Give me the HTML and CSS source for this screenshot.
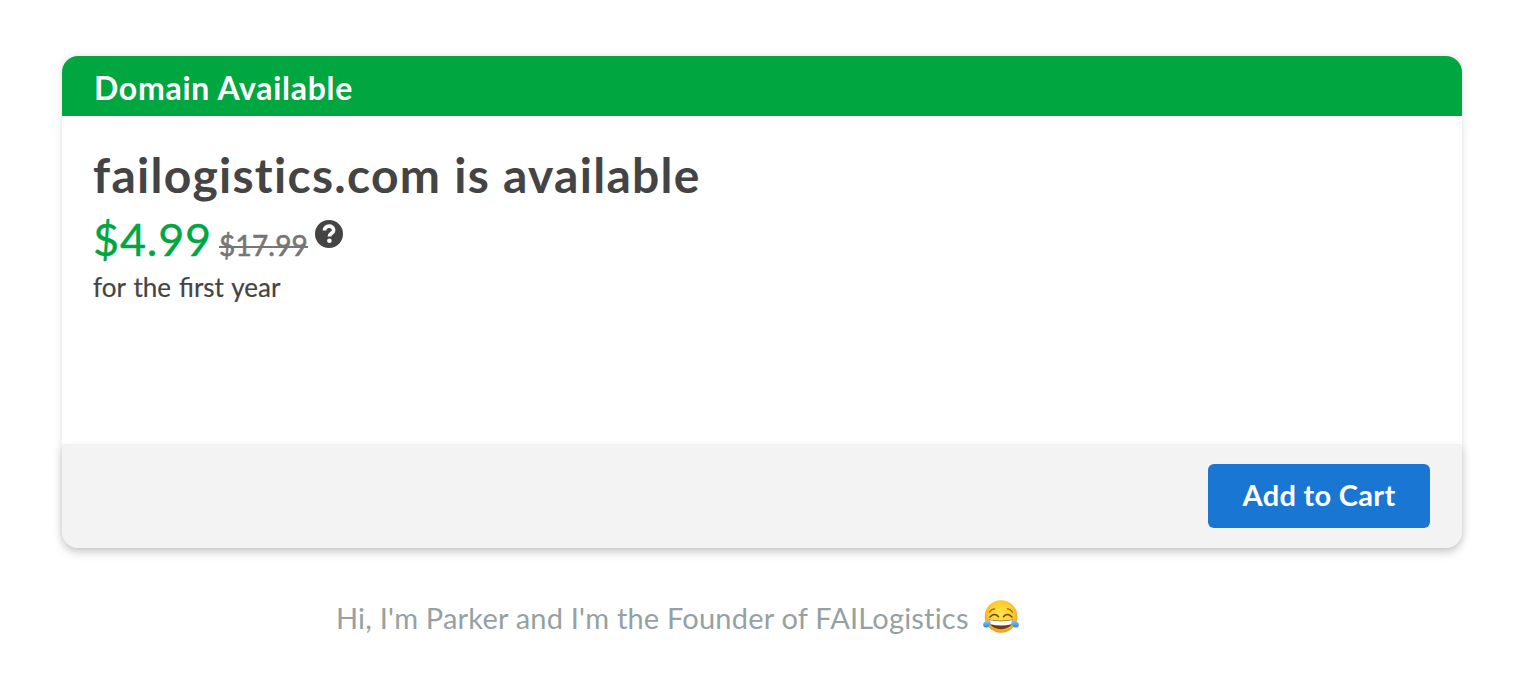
FILE: index.html
```html
<!DOCTYPE html>
<html lang="en">
<head>
    <meta charset="UTF-8">
    <meta name="viewport" content="width=device-width, initial-scale=1.0">
    <title>FAILogistics</title>
    <link rel="stylesheet" href="styles.css">
</head>
<body>
    <!-- Domain card -->
    <section class="card">
        <header class="card-header"><span>Domain Available</span></header>
        <div class="card-body">
            <h1><span>failogistics.com is available</span></h1>
            <div class="prices">
                <span class="price">$4.99</span>
                <span class="old-price"><s>$17.99</s></span>
                <svg class="help" viewBox="0 0 28 28" aria-label="Help">
                    <circle cx="14" cy="14" r="14" fill="#444"/>
                    <path d="M9.5 10.5C9.7 4.800 18.600 4.800 18.600 10.200c0 3.200-4.200 3-4.200 6.300" fill="none" stroke="#fff" stroke-width="3.700"/>
                    <circle cx="14.4" cy="20.8" r="2.3" fill="#fff"/>
                </svg>
            </div>
            <p class="term"><span>for the first year</span></p>
        </div>
        <footer class="card-footer">
            <button class="cart-btn"><span>Add to Cart</span></button>
        </footer>
    </section>

    <!-- Caption -->
    <p class="caption">
        <span class="caption-text">Hi, I'm Parker and I'm the Founder of FAILogistics</span>
        <svg class="joy" viewBox="0 0 36 34" aria-label="Face with tears of joy">
            <defs>
                <radialGradient id="face" cx="50%" cy="42%" r="58%">
                    <stop offset="0" stop-color="#ffe64a"/>
                    <stop offset="0.65" stop-color="#fdcb32"/>
                    <stop offset="1" stop-color="#ed9b1c"/>
                </radialGradient>
                <linearGradient id="tear" x1="0" y1="0" x2="0" y2="1">
                    <stop offset="0" stop-color="#8fd0f8"/>
                    <stop offset="1" stop-color="#2d86dc"/>
                </linearGradient>
            </defs>
            <circle cx="18" cy="16.5" r="16.3" fill="url(#face)"/>
            <path d="M6.5 12.2q1.8-3.2 5.2-3.4M29.5 12.2q-1.8-3.2-5.2-3.4" fill="none" stroke="#a86a12" stroke-width="1.3" stroke-linecap="round"/>
            <path d="M7 17q4.3-4.6 8.5-.4M29 17q-4.3-4.6-8.5-.4" fill="none" stroke="#70420d" stroke-width="1.5" stroke-linecap="round"/>
            <path d="M5.8 19.5q12.2 2.5 24.4 0c-.3 6.500-6 9.700-12.200 9.700s-11.900-3.200-12.200-9.700z" fill="#6e3b13"/>
            <path d="M6.6 20.1q11.4 2.5 22.8 0l-.9 4.200q-10.500 2.400-21 0z" fill="#fff"/>
            <path d="M7.4 19.8c.6 5-1.500 8-4.400 7.800-2.900-.2-3.700-3.300-2-5.100 1.500-1.600 4.200-1.200 6.400-2.700z" fill="url(#tear)"/>
            <path d="M28.6 19.8c-.6 5 1.500 8 4.400 7.800 2.900-.2 3.700-3.300 2-5.100-1.500-1.600-4.200-1.200-6.400-2.700z" fill="url(#tear)"/>
        </svg>
    </p>
</body>
</html>
```
FILE: styles.css
```css
* {
    box-sizing: border-box;
}

body {
    margin: 0;
    padding: 56px 64px 0 62px;
    background: #fff;
    color: #444;
    font-family: Lato, "Open Sans", sans-serif;
    white-space: nowrap;
}

.card {
    display: flex;
    flex-direction: column;
    height: 492px;
    border-radius: 16px;
    box-shadow: 0 0 9px rgba(0, 0, 0, 0.12);
}

.card-header {
    height: 60px;
    padding-left: 32px;
    border-radius: 16px 16px 0 0;
    background: #00a63f;
    color: #fff;
    font-size: 32px;
    font-weight: 700;
    line-height: 64px;
    letter-spacing: 0.72px;
}

.card-body {
    flex: 1;
    padding: 29px 31px 0;
}

h1 {
    margin: 0;
    font-size: 48px;
    line-height: 60px;
    letter-spacing: 1.28px;
}

.prices {
    display: flex;
    align-items: baseline;
    height: 64px;
    line-height: 68px;
}

.price {
    width: 126px;
    color: #00a63f;
    font-size: 45px;
    letter-spacing: 0.8px;
    -webkit-text-stroke: 0.4px #00a63f;
}

.old-price {
    width: 96px;
    color: #767676;
    font-size: 28px;
    letter-spacing: 0.2px;
    -webkit-text-stroke: 0.6px #767676;
}

.old-price s {
    text-decoration-thickness: 2px;
}

.help {
    align-self: flex-start;
    width: 28px;
    height: 28px;
    margin-top: 15px;
}

.term {
    margin: 0;
    font-size: 26px;
    line-height: 36px;
    word-spacing: 1.4px;
    -webkit-text-stroke: 0.2px #444;
}

.card-footer {
    display: flex;
    align-items: center;
    justify-content: flex-end;
    height: 104px;
    padding-right: 32px;
    border-radius: 0 0 16px 16px;
    background: #f3f3f3;
    box-shadow: 0 5px 10px rgba(0, 0, 0, 0.16);
}

.cart-btn {
    width: 222px;
    height: 64px;
    padding: 0 0 4px;
    border: 0;
    border-radius: 6px;
    background: #1976d2;
    color: #fff;
    font: 700 29px Lato, "Open Sans", sans-serif;
    letter-spacing: 0.3px;
}

.caption {
    display: flex;
    margin: 52px 0 0 274px;
    color: #95a1a3;
    font-size: 29px;
    line-height: 36px;
}

.caption-text {
    width: 632px;
    letter-spacing: 0.2px;
}

.joy {
    width: 36px;
    height: 34px;
    margin-left: 15px;
}
```
